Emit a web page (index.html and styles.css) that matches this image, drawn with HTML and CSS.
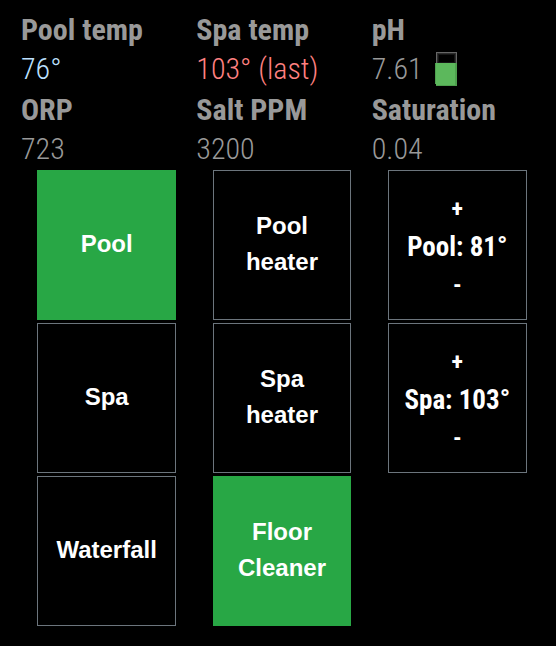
FILE: index.html
```html
<!DOCTYPE html>
<html lang="en">
<head>
<meta charset="utf-8">
<meta name="viewport" content="width=device-width, initial-scale=1">
<title>Pool status</title>
<link rel="stylesheet" href="styles.css">
</head>
<body>
<main class="panel">
  <dl class="readings">
    <div class="reading"><dt>Pool temp</dt><dd class="cold">76°</dd></div>
    <div class="reading"><dt>Spa temp</dt><dd class="hot">103° (last)</dd></div>
    <div class="reading"><dt>pH</dt><dd>7.61
      <svg class="tank" viewBox="0 0 22 34" aria-hidden="true">
        <path d="M1 0H22V34H1Z" fill="#666"/>
        <path d="M2 1H21V11H2Z" fill="#2c2c2c"/>
        <path d="M3 2H20V11H3Z" fill="#141414"/>
        <path d="M4 3H19V10H4Z" fill="#000"/>
        <path d="M0 11H22V34H1V32H0Z" fill="#4ea04e"/>
        <path d="M1 11H20V33H1Z" fill="#5cb85c"/>
      </svg></dd></div>
    <div class="reading"><dt>ORP</dt><dd>723</dd></div>
    <div class="reading"><dt>Salt PPM</dt><dd>3200</dd></div>
    <div class="reading"><dt>Saturation</dt><dd>0.04</dd></div>
  </dl>
  <section class="controls">
    <button class="tile on" type="button">Pool</button>
    <button class="tile" type="button">Pool heater</button>
    <div class="tile setpoint">
      <button class="step" type="button">+</button>
      <span class="target">Pool: 81°</span>
      <button class="step" type="button">-</button>
    </div>
    <button class="tile" type="button">Spa</button>
    <button class="tile" type="button">Spa heater</button>
    <div class="tile setpoint">
      <button class="step" type="button">+</button>
      <span class="target">Spa: 103°</span>
      <button class="step" type="button">-</button>
    </div>
    <button class="tile" type="button">Waterfall</button>
    <button class="tile on" type="button">Floor Cleaner</button>
  </section>
</main>
</body>
</html>
```
FILE: styles.css
```css
* {
  box-sizing: border-box;
}

body {
  margin: 0;
  background: #000;
  color: #999;
  font-family: "Roboto Condensed", Roboto, sans-serif;
}

.panel {
  padding: 10px 12px 20px 20px;
}

.readings,
.controls {
  display: grid;
  grid-template-columns: repeat(3, minmax(0, 1fr));
  gap: 0 2px;
  margin: 0;
}

.reading {
  padding-left: 1px;
  font-size: 30px;
  line-height: 40px;
  white-space: nowrap;
}

.reading dt {
  font-weight: 700;
}

.reading dd {
  display: flex;
  align-items: center;
  gap: 12px;
  height: 40px;
  margin: 0;
  padding-bottom: 2px;
  font-weight: 300;
}

.reading .cold {
  color: #bde0ff;
}

.reading .hot {
  color: #ff8080;
}

.tank {
  width: 22px;
  height: 34px;
}

.controls {
  row-gap: 3px;
  justify-items: center;
}

.tile {
  width: 80%;
  min-height: 150px;
  padding: 0 16px 2px;
  border: 1px solid #6c757d;
  background: #000;
  color: #fff;
  font: 700 24px/36px "Liberation Sans", Arial, sans-serif;
}

.on {
  border-color: #28a745;
  background: #28a745;
}

.setpoint {
  display: flex;
  flex-direction: column;
  align-items: center;
  justify-content: center;
  padding: 4px 0 0;
}

.step {
  padding: 0 8px;
  border: 0;
  background: none;
  color: inherit;
  font: 700 24px/36px "Roboto Condensed", Roboto, sans-serif;
}

.target {
  font: 700 27px/40px "Roboto Condensed", Roboto, sans-serif;
  white-space: nowrap;
}
```
